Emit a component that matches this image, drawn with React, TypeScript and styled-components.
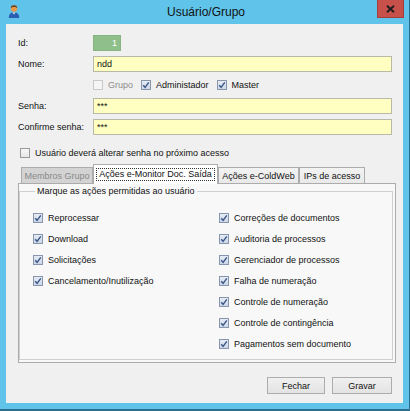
import React from 'react';
import styled, { createGlobalStyle } from 'styled-components';

const GlobalStyle = createGlobalStyle`
  html, body {
    margin: 0;
    padding: 0;
    background: #f0f0f0;
  }
  body {
    font-family: "Liberation Sans", Arial, sans-serif;
  }
`;

const Window = styled.div`
  box-sizing: border-box;
  width: 410px;
  height: 411px;
  background: #60c3ea;
  border-right: 1px solid #2d6e8e;
  border-bottom: 2px solid #2d6e8e;
  display: flex;
  flex-direction: column;
`;

const TitleBar = styled.div`
  height: 24px;
  flex: none;
  display: grid;
  grid-template-columns: 1fr auto 1fr;
  align-items: start;
  padding: 0 5px 0 8px;
`;

const TitleIcon = styled.div`
  padding-top: 4px;
  line-height: 0;
`;

const Title = styled.div`
  font-size: 12px;
  line-height: 25px;
  color: #111;
`;

const CloseButton = styled.div`
  justify-self: end;
  box-sizing: border-box;
  width: 27px;
  height: 18px;
  background: #c7504b;
  border: 1px solid #a43e3a;
  border-top: none;
  display: flex;
  align-items: center;
  justify-content: center;
`;

const Client = styled.div`
  flex: 1;
  margin: 0 6px 6px 6px;
  background: #f0f0f0;
  display: flex;
  flex-direction: column;
  font-size: 9px;
  color: #111;
`;

const Form = styled.div`
  display: grid;
  grid-template-columns: 75px 299px;
  grid-auto-rows: 16px;
  row-gap: 5px;
  align-items: center;
  padding: 11px 0 0 12px;
`;

const Label = styled.div`
  line-height: 16px;
`;

const IdBox = styled.div`
  box-sizing: border-box;
  width: 28px;
  height: 16px;
  background: #8fbf8b;
  border: 1px solid #84b480;
  color: #fff;
  text-align: right;
  padding-right: 3px;
  line-height: 14px;
`;

const TextField = styled.input`
  box-sizing: border-box;
  width: 299px;
  height: 16px;
  margin: 0;
  padding: 0 3px;
  background: #ffffc2;
  border: 1px solid #b9b9a8;
  font-family: "Liberation Sans", Arial, sans-serif;
  font-size: 9px;
  color: #111;
  outline: none;
`;

const CheckRow = styled.div`
  display: flex;
  align-items: center;
  gap: 8px;
`;

const CheckLabel = styled.label<{ $disabled?: boolean }>`
  display: flex;
  align-items: center;
  gap: 5px;
  height: 16px;
  white-space: nowrap;
  color: ${p => (p.$disabled ? '#8d8d8d' : '#111')};
`;

const Box = styled.span<{ $checked?: boolean; $disabled?: boolean }>`
  box-sizing: border-box;
  flex: none;
  width: 10px;
  height: 10px;
  display: inline-flex;
  align-items: center;
  justify-content: center;
  border: 1px solid ${p => (p.$disabled ? '#c9c9c9' : p.$checked ? '#8796ad' : '#9a9a9a')};
  background: ${p =>
    p.$disabled
      ? '#f5f5f5'
      : p.$checked
      ? 'linear-gradient(#e6ecf5, #cbd6e7)'
      : 'linear-gradient(#f7f7f7, #e6e6e6)'};
`;

const AlterRow = styled.div`
  margin: 10px 0 0 14px;
`;

const TabArea = styled.div`
  margin: 3px 7px 0 12px;
  display: flex;
  flex-direction: column;
`;

const TabStrip = styled.div`
  height: 19px;
  display: flex;
  align-items: flex-end;
  padding-left: 3px;
`;

const Tab = styled.div<{ $w: number; $active?: boolean; $disabled?: boolean }>`
  box-sizing: border-box;
  width: ${p => p.$w}px;
  height: ${p => (p.$active ? 20 : 16)}px;
  margin-bottom: ${p => (p.$active ? -1 : 0)}px;
  position: relative;
  z-index: ${p => (p.$active ? 1 : 0)};
  border: 1px solid #acacac;
  border-bottom: none;
  background: ${p => (p.$active ? '#ffffff' : p.$disabled ? '#d3d3d3' : 'linear-gradient(#f3f3f3, #e9e9e9)')};
  color: ${p => (p.$disabled ? '#8a8a8a' : '#111')};
  display: flex;
  align-items: ${p => (p.$active ? 'flex-start' : 'center')};
  justify-content: center;
  padding-top: ${p => (p.$active ? 3 : 0)}px;
  white-space: nowrap;
`;

const FocusText = styled.span`
  border: 1px dotted #333;
  padding: 0 2px;
  line-height: 11px;
`;

const Panel = styled.div`
  box-sizing: border-box;
  height: 180px;
  border: 1px solid #acacac;
  background: #f8f8f8;
  padding: 2px 2px 2px 0;
  display: flex;
`;

const GroupBox = styled.fieldset`
  flex: 1;
  margin: 0;
  padding: 0 0 0 13px;
  border: 1px solid #cdd1d4;
  min-width: 0;
`;

const Legend = styled.legend`
  margin-left: 2px;
  padding: 0 2px;
  line-height: 11px;
  font-size: 9px;
`;

const Columns = styled.div`
  display: grid;
  grid-template-columns: 186px 1fr;
  padding-top: 13px;
`;

const Column = styled.div`
  display: flex;
  flex-direction: column;
  gap: 5px;
`;

const ButtonBar = styled.div`
  display: flex;
  justify-content: flex-end;
  gap: 7px;
  margin: 14px 11px 0 0;
`;

const Button = styled.button<{ $w: number }>`
  box-sizing: border-box;
  width: ${p => p.$w}px;
  height: 17px;
  margin: 0;
  padding: 0;
  border: 1px solid #acacac;
  background: linear-gradient(#f0f0f0, #e3e3e3);
  font-family: "Liberation Sans", Arial, sans-serif;
  font-size: 9px;
  color: #111;
`;

function Check(props: { label: string; checked?: boolean; disabled?: boolean }) {
  return (
    <CheckLabel $disabled={props.disabled}>
      <Box $checked={props.checked} $disabled={props.disabled}>
        {props.checked && (
          <svg width="8" height="8" viewBox="0 0 8 8">
            <path d="M1.2 4.2 L3.1 6.3 L6.8 1.4" fill="none" stroke="#3b5687" strokeWidth="1.4" />
          </svg>
        )}
      </Box>
      {props.label}
    </CheckLabel>
  );
}

const leftItems = ['Reprocessar', 'Download', 'Solicitações', 'Cancelamento/Inutilização'];
const rightItems = [
  'Correções de documentos',
  'Auditoria de processos',
  'Gerenciador de processos',
  'Falha de numeração',
  'Controle de numeração',
  'Controle de contingência',
  'Pagamentos sem documento',
];

export default function App() {
  return (
    <>
      <GlobalStyle />
      <Window>
        <TitleBar>
          <TitleIcon>
            <svg width="12" height="14" viewBox="0 0 12 14">
              <path d="M0.8 14 C0.8 9.6 2.8 8.4 6 8.4 C9.2 8.4 11.2 9.6 11.2 14 Z" fill="#2b5fb3" />
              <path d="M4.6 8.5 L6 10.6 L7.4 8.5 Z" fill="#f4f4f4" />
              <circle cx="6" cy="4.6" r="3.2" fill="#e59a4c" />
              <path d="M2.8 4.2 C2.8 1.8 4.2 1.2 6 1.2 C7.8 1.2 9.2 1.8 9.2 4.2 C8.2 3 7 2.8 6 3 C5 2.8 3.8 3 2.8 4.2 Z" fill="#6b3f17" />
            </svg>
          </TitleIcon>
          <Title>Usuário/Grupo</Title>
          <CloseButton>
            <svg width="9" height="8" viewBox="0 0 9 8">
              <path d="M1 0.8 L8 7.2 M8 0.8 L1 7.2" stroke="#1d1d1d" strokeWidth="1.9" />
            </svg>
          </CloseButton>
        </TitleBar>
        <Client>
          <Form>
            <Label>Id:</Label>
            <IdBox>1</IdBox>
            <Label>Nome:</Label>
            <TextField readOnly value="ndd" />
            <div />
            <CheckRow>
              <Check label="Grupo" disabled />
              <Check label="Administador" checked />
              <Check label="Master" checked />
            </CheckRow>
            <Label>Senha:</Label>
            <TextField readOnly value="***" />
            <Label>Confirme senha:</Label>
            <TextField readOnly value="***" />
          </Form>
          <AlterRow>
            <Check label="Usuário deverá alterar senha no próximo acesso" />
          </AlterRow>
          <TabArea>
            <TabStrip>
              <Tab $w={72} $disabled>Membros Grupo</Tab>
              <Tab $w={125} $active>
                <FocusText>Ações e-Monitor Doc. Saída</FocusText>
              </Tab>
              <Tab $w={81}>Ações e-ColdWeb</Tab>
              <Tab $w={66}>IPs de acesso</Tab>
            </TabStrip>
            <Panel>
              <GroupBox>
                <Legend>Marque as ações permitidas ao usuário</Legend>
                <Columns>
                  <Column>
                    {leftItems.map(item => (
                      <Check key={item} label={item} checked />
                    ))}
                  </Column>
                  <Column>
                    {rightItems.map(item => (
                      <Check key={item} label={item} checked />
                    ))}
                  </Column>
                </Columns>
              </GroupBox>
            </Panel>
          </TabArea>
          <ButtonBar>
            <Button $w={58}>Fechar</Button>
            <Button $w={60}>Gravar</Button>
          </ButtonBar>
        </Client>
      </Window>
    </>
  );
}
